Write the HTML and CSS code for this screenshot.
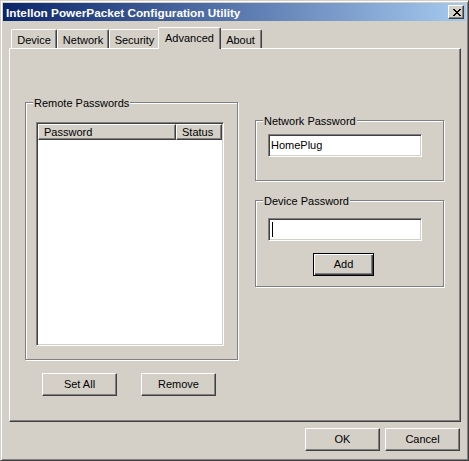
FILE: index.html
```html
<!DOCTYPE html>
<html>
<head>
<meta charset="utf-8">
<title>Intellon PowerPacket Configuration Utility</title>
<link rel="stylesheet" href="styles.css">
</head>
<body>
<div class="window">
  <div class="titlebar">
    <span class="title">Intellon PowerPacket Configuration Utility</span>
    <div class="close">
      <svg width="8" height="7" viewBox="0 0 8 7" shape-rendering="crispEdges"><path fill="#000" d="M0 0h2v1H0z M6 0h2v1H6z M1 1h2v1H1z M5 1h2v1H5z M2 2h4v1H2z M3 3h2v1H3z M2 4h4v1H2z M1 5h2v1H1z M5 5h2v1H5z M0 6h2v1H0z M6 6h2v1H6z"/></svg>
    </div>
  </div>
  <div class="body">
    <div class="tabs">
      <div class="tab t-device">Device</div>
      <div class="tab t-network">Network</div>
      <div class="tab t-security">Security</div>
      <div class="tab t-advanced active">Advanced</div>
      <div class="tab t-about">About</div>
    </div>
    <div class="panel">
      <div class="col-left">
        <div class="group remote">
          <span class="legend">Remote Passwords</span>
          <div class="listview">
            <div class="lv-header">
              <div class="lv-col c-pass">Password</div>
              <div class="lv-col c-status">Status</div>
            </div>
          </div>
        </div>
        <div class="btn-row">
          <button class="btn">Set All</button>
          <button class="btn">Remove</button>
        </div>
      </div>
      <div class="col-right">
        <div class="group net">
          <span class="legend">Network Password</span>
          <div class="textbox tb-net">HomePlug</div>
        </div>
        <div class="group dev">
          <span class="legend">Device Password</span>
          <div class="textbox tb-dev"><span class="caret"></span></div>
          <button class="btn default add">Add</button>
        </div>
      </div>
    </div>
    <div class="dlg-buttons">
      <button class="btn">OK</button>
      <button class="btn">Cancel</button>
    </div>
  </div>
</div>
</body>
</html>
```

FILE: styles.css
```css
* { box-sizing: border-box; }

body {
  margin: 0;
  background: #d4d0c8;
  font-family: "Liberation Sans", Arial, sans-serif;
  font-size: 11px;
  color: #000;
}

.window {
  width: 469px;
  height: 461px;
  background: #d4d0c8;
  border: 1px solid;
  border-color: #d4d0c8 #404040 #404040 #d4d0c8;
  box-shadow: inset 1px 1px #fff, inset -1px -1px #808080;
  padding: 2px;
}

.titlebar {
  height: 18px;
  background: linear-gradient(to right, #0a246a, #a6caf0);
  display: flex;
  align-items: center;
  justify-content: space-between;
  padding: 0 2px 0 3px;
}

.title {
  color: #fff;
  font-weight: bold;
  font-size: 11.75px;
  line-height: 13px;
}

.close {
  width: 16px;
  height: 14px;
  background: #d4d0c8;
  border: 1px solid;
  border-color: #fff #404040 #404040 #fff;
  box-shadow: inset -1px -1px #808080;
  padding: 3px 0 0 4px;
  display: flex;
  align-items: flex-start;
}

.close svg { display: block; }

.body {
  padding: 6px 5px 0 6px;
}

.tabs {
  display: flex;
  align-items: flex-end;
  height: 21px;
  padding-left: 2px;
}

.tab {
  height: 19px;
  border-top: 1px solid #fff;
  border-left: 1px solid #fff;
  border-right: 1px solid #404040;
  box-shadow: inset -1px 0 #808080;
  border-top-left-radius: 2px;
  border-top-right-radius: 2px;
  background: #d4d0c8;
  text-align: center;
  line-height: 13px;
  padding-top: 4px;
}

.t-device { width: 46px; }
.t-network { width: 52px; }
.t-security { width: 51px; }
.t-about { width: 43px; }

.tab.active {
  width: 63px;
  height: 22px;
  margin: 0 -2px -1px;
  position: relative;
  z-index: 1;
}

.panel {
  height: 374px;
  border: 1px solid;
  border-color: #fff #404040 #404040 #fff;
  box-shadow: inset -1px -1px #808080;
  display: flex;
  align-items: flex-start;
  padding: 53px 0 0 15px;
}

.group {
  border: 1px solid #808080;
  box-shadow: 1px 1px #fff, inset 1px 1px #fff;
}

.legend {
  display: block;
  width: fit-content;
  height: 13px;
  line-height: 13px;
  margin: -6px 0 0 7px;
  padding: 0 1px;
  background: #d4d0c8;
}

.col-left { width: 213px; }

.group.remote {
  height: 258px;
}

.listview {
  width: 188px;
  height: 224px;
  margin: 12px 0 0 10px;
  background: #fff;
  border: 1px solid;
  border-color: #808080 #fff #fff #808080;
  box-shadow: inset 1px 1px #404040, inset -1px -1px #d4d0c8;
  padding: 1px;
}

.lv-header {
  display: flex;
  height: 16px;
}

.lv-col {
  background: #d4d0c8;
  border: 1px solid;
  border-color: #fff #404040 #404040 #fff;
  box-shadow: inset -1px -1px #808080;
  line-height: 13px;
  padding: 1px 0 0 5px;
}

.c-pass { width: 138px; }
.c-status { width: 46px; }

.btn-row {
  display: flex;
  gap: 24px;
  margin: 13px 0 0 17px;
}

.btn {
  width: 75px;
  height: 23px;
  padding: 0;
  margin: 0;
  background: #d4d0c8;
  border: 1px solid;
  border-color: #fff #404040 #404040 #fff;
  box-shadow: inset -1px -1px #808080;
  font-family: "Liberation Sans", Arial, sans-serif;
  font-size: 11px;
  color: #000;
  line-height: 13px;
}

.btn.default {
  border: 1px solid #000;
  box-shadow: inset 1px 1px #fff, inset -1px -1px #404040, inset -2px -2px #808080;
}

.col-right {
  width: 189px;
  margin: 18px 0 0 17px;
}

.group.net {
  height: 61px;
}

.group.dev {
  height: 87px;
  margin-top: 19px;
}

.textbox {
  width: 154px;
  height: 23px;
  margin-left: 12px;
  background: #fff;
  border: 1px solid;
  border-color: #808080 #fff #fff #808080;
  box-shadow: inset 1px 1px #404040, inset -1px -1px #d4d0c8;
  line-height: 13px;
  padding: 4px 0 0 2px;
}

.tb-net { margin-top: 6px; }
.tb-dev { margin-top: 10px; }

.caret {
  display: block;
  width: 1px;
  height: 15px;
  margin: -1px 0 0 1px;
  background: #000;
}

.add {
  width: 61px;
  display: block;
  margin: 12px 0 0 57px;
}

.dlg-buttons {
  display: flex;
  justify-content: flex-end;
  gap: 5px;
  margin-top: 6px;
  padding-right: 1px;
}
```
